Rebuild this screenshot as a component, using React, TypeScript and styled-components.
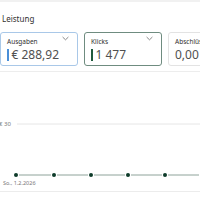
import React from "react";
import styled, { createGlobalStyle } from "styled-components";

const GlobalStyle = createGlobalStyle`
  html, body {
    margin: 0;
    padding: 0;
    background: #ffffff;
    font-family: "Noto Sans", "Open Sans", Arial, sans-serif;
    overflow: hidden;
  }
`;

const Page = styled.div`
  width: 200px;
  height: 200px;
  overflow: hidden;
  border-top: 2px solid #f1f1f1;
  box-sizing: border-box;
`;

const Title = styled.div`
  margin: 11px 0 0 2px;
  font-size: 8px;
  line-height: 12px;
  color: #323130;
`;

const CardRow = styled.div`
  display: flex;
  gap: 6px;
  margin-top: 7px;
  padding-bottom: 5px;
  border-bottom: 1px solid #ededed;
  overflow: hidden;
`;

const Card = styled.div<{ $border: string }>`
  flex: 0 0 auto;
  width: 78px;
  height: 34px;
  box-sizing: border-box;
  border: 1.5px solid ${({ $border }) => $border};
  border-radius: 3px;
  padding: 4px 0 0 6px;
  position: relative;
  background: #fff;
`;

const Label = styled.div`
  font-size: 6.5px;
  line-height: 9px;
  color: #323130;
  white-space: nowrap;
`;

const ValueRow = styled.div`
  display: flex;
  align-items: center;
  gap: 3px;
  margin-top: 1px;
`;

const Marker = styled.div<{ $color: string }>`
  width: 1.5px;
  height: 12px;
  background: ${({ $color }) => $color};
`;

const Value = styled.div`
  font-size: 12px;
  line-height: 16px;
  color: #505050;
  white-space: nowrap;
`;

const Chevron = styled.svg`
  position: absolute;
  top: 3px;
  right: 8px;
`;

const Chart = styled.svg`
  display: block;
  margin-top: 1px;
`;

const ChartFooter = styled.div`
  border-top: 1.5px solid #ececec;
`;

const Down = () => (
  <Chevron width="7" height="5" viewBox="0 0 7 5">
    <path d="M0.6 1 L3.5 3.8 L6.4 1" fill="none" stroke="#6b6b6b" strokeWidth="0.8" />
  </Chevron>
);

const dots = [16, 54, 91, 128, 165, 202];

export default function App() {
  return (
    <Page>
      <GlobalStyle />
      <Title>Leistung</Title>
      <CardRow>
        <Card $border="#a9c8e8">
          <Label>Ausgaben</Label>
          <ValueRow>
            <Marker $color="#4a8fd8" />
            <Value>€ 288,92</Value>
          </ValueRow>
          <Down />
        </Card>
        <Card $border="#6f8c80">
          <Label>Klicks</Label>
          <ValueRow>
            <Marker $color="#1f5a3c" />
            <Value>1 477</Value>
          </ValueRow>
          <Down />
        </Card>
        <Card $border="#e3e3e3">
          <Label>Abschlüsse</Label>
          <ValueRow>
            <Value>0,00</Value>
          </ValueRow>
        </Card>
      </CardRow>
      <Chart width="200" height="118" viewBox="0 72 200 118">
        <line x1="17" y1="123" x2="200" y2="123" stroke="#e6e6e6" strokeWidth="1" />
        <text x="-1" y="125" fontSize="6" fill="#777" fontFamily="Noto Sans, Arial, sans-serif">€ 30</text>
        {dots.slice(0, -1).map((x, i) => (
          <line key={x} x1={x + 3} y1="174" x2={dots[i + 1] - 3} y2="174" stroke="#8ea39a" strokeWidth="1" />
        ))}
        {dots.map((x) => (
          <circle key={x} cx={x} cy="174" r="2" fill="#0e3b2a" />
        ))}
        <text x="3" y="184" fontSize="5.5" fill="#777" fontFamily="Noto Sans, Arial, sans-serif">So., 1.2.2026</text>
      </Chart>
      <ChartFooter />
    </Page>
  );
}
